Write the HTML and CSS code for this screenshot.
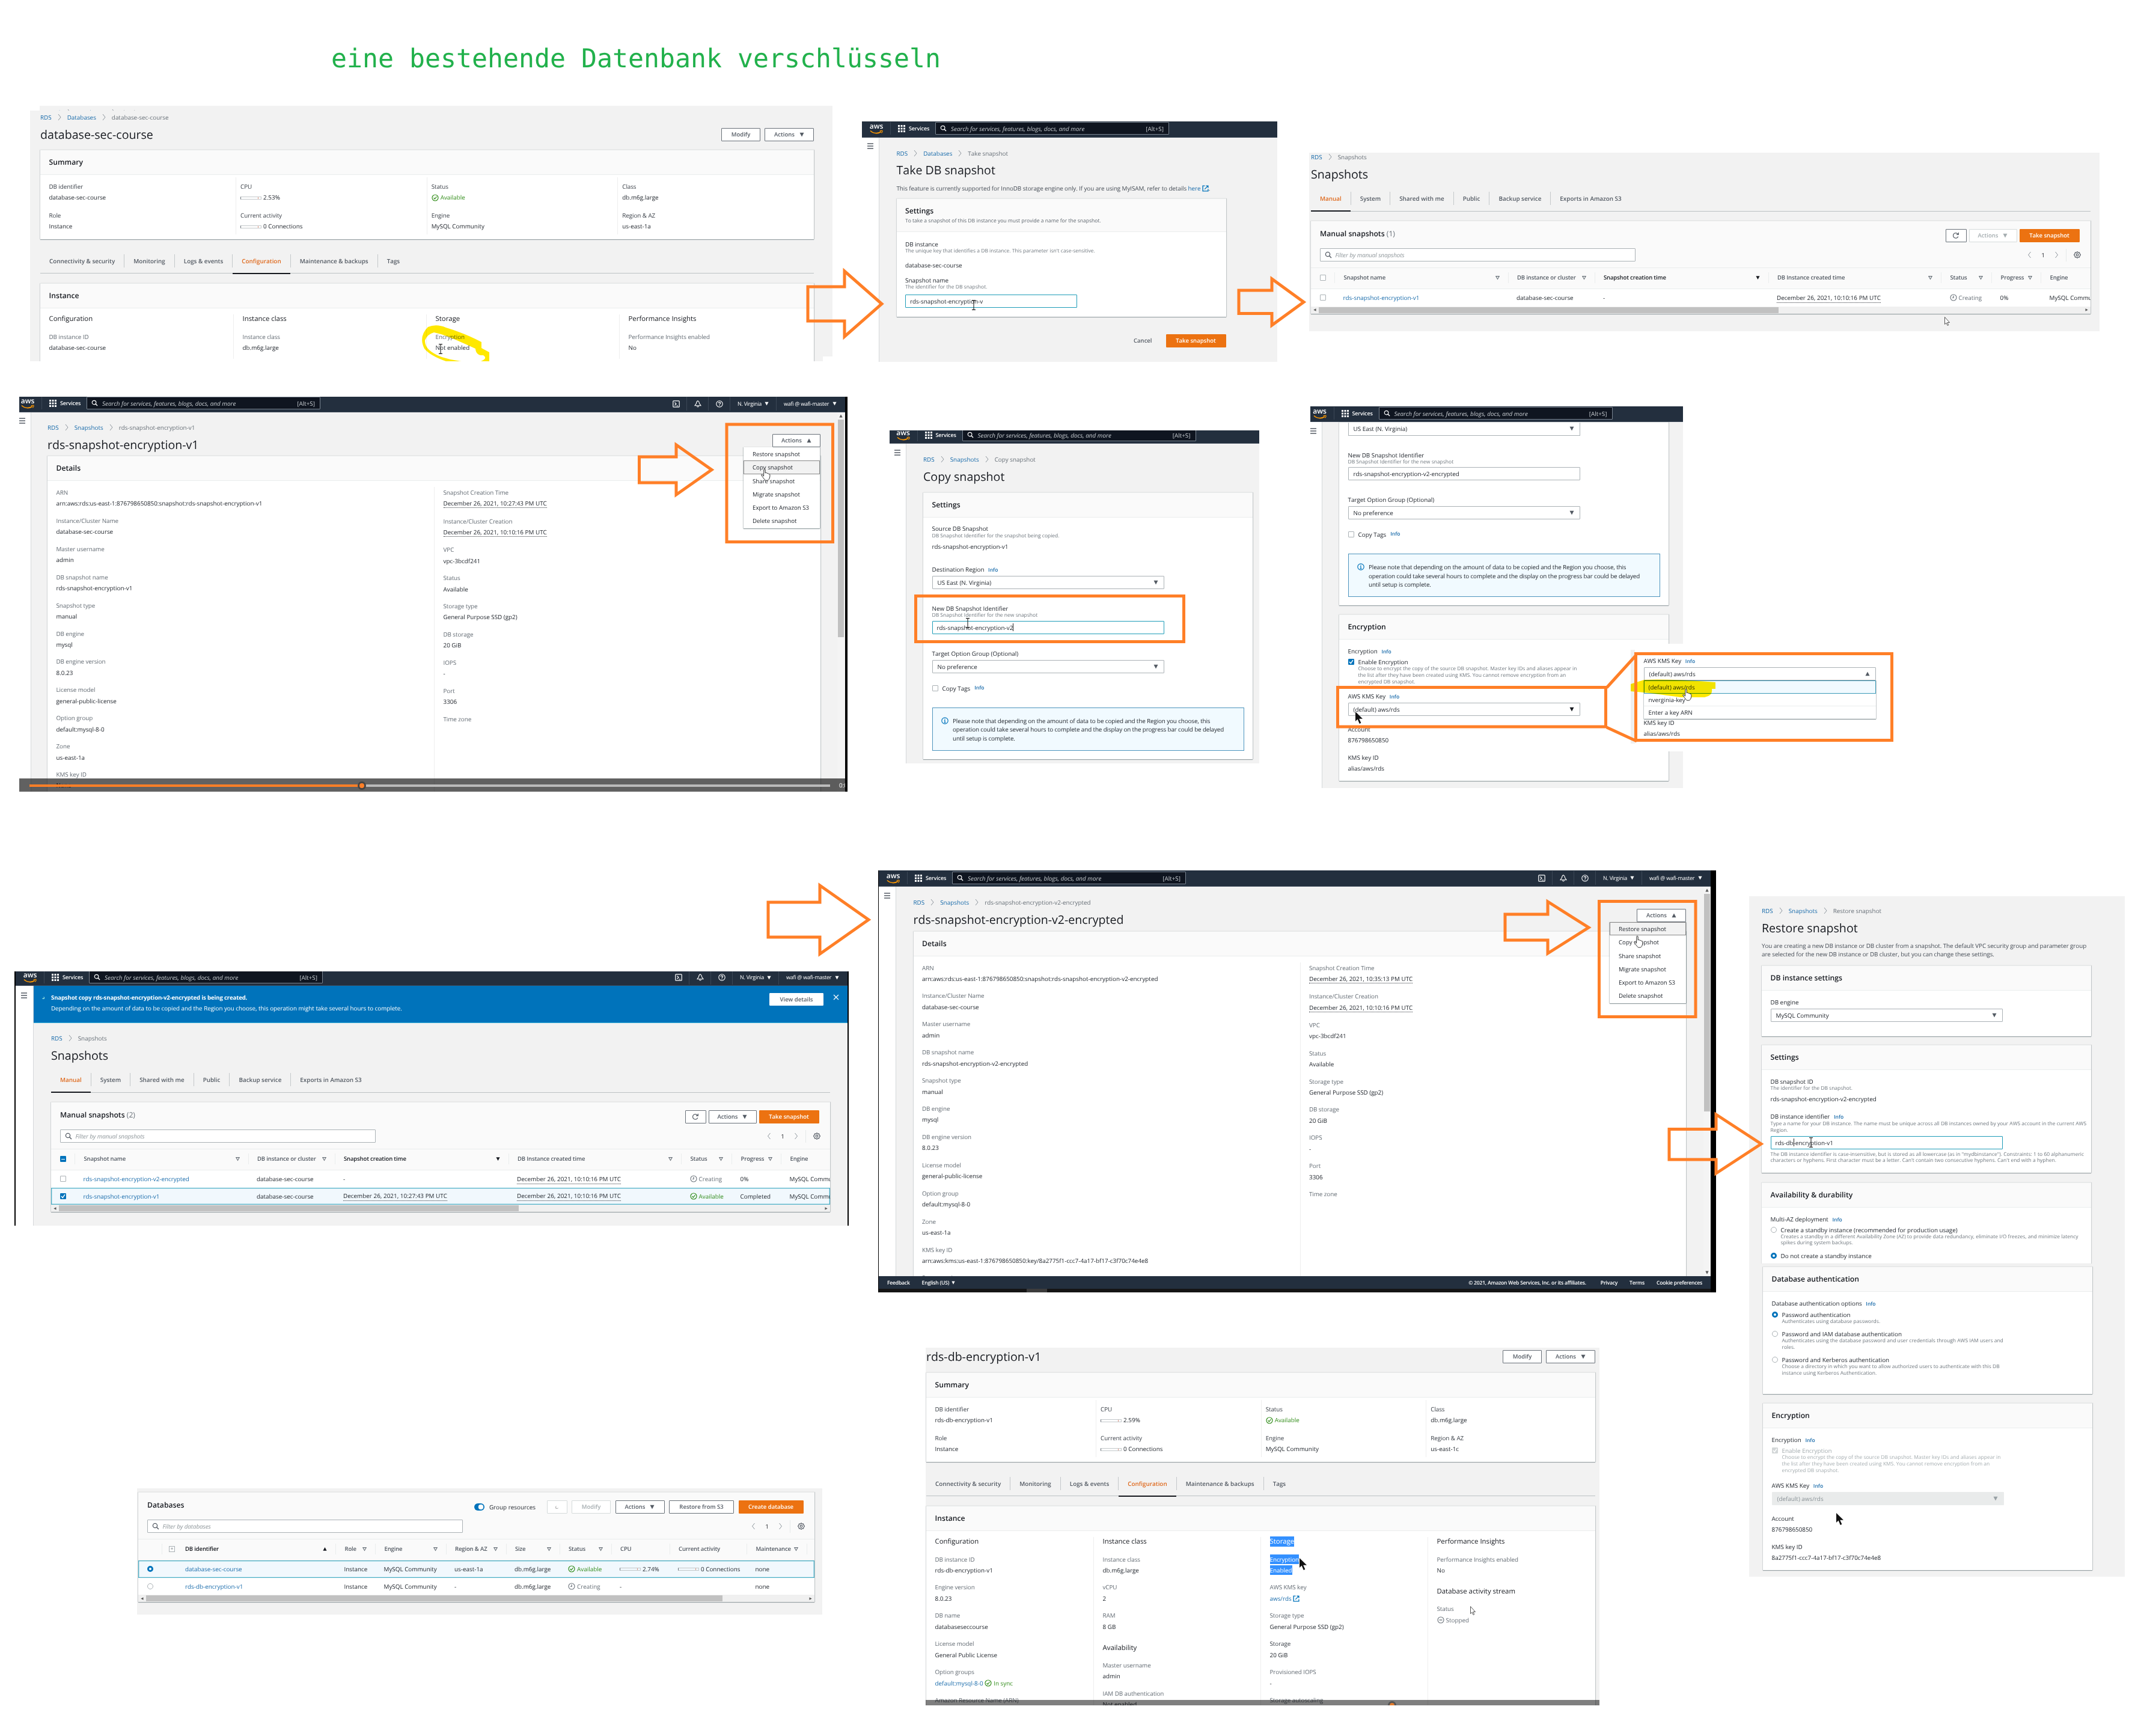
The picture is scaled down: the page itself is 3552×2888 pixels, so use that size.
FILE: index.html
```html
<!DOCTYPE html>
<html lang="de">
<head>
<meta charset="utf-8">
<title>eine bestehende Datenbank verschlüsseln</title>
<link rel="stylesheet" href="styles.css">
</head>
<body>
<svg class="defs" width="0" height="0">
  <defs>
    <symbol id="chev" viewBox="0 0 6 12"><path d="M1 1l4 5-4 5" fill="none" stroke="#8d959c" stroke-width="1"/></symbol>
    <symbol id="chevl" viewBox="0 0 6 12"><path d="M5 1L1 6l4 5" fill="none" stroke="#8d959c" stroke-width="1"/></symbol>
    <symbol id="search" viewBox="0 0 12 12"><circle cx="5" cy="5" r="3.6" fill="none" stroke="currentColor" stroke-width="1.3"/><path d="M7.7 7.7l3.3 3.3" stroke="currentColor" stroke-width="1.5"/></symbol>
    <symbol id="grid" viewBox="0 0 12 12"><path d="M0 0h3v3H0zM4.5 0h3v3h-3zM9 0h3v3H9zM0 4.5h3v3H0zM4.5 4.5h3v3h-3zM9 4.5h3v3H9zM0 9h3v3H0zM4.5 9h3v3h-3zM9 9h3v3H9z" fill="#fff"/></symbol>
    <symbol id="menu" viewBox="0 0 10 10"><path d="M0 1h10M0 5h10M0 9h10" stroke="#545b64" stroke-width="1.4"/></symbol>
    <symbol id="smile" viewBox="0 0 22 8"><path d="M1 1.5C6 6.5 14 6.8 19 3" fill="none" stroke="#f90" stroke-width="1.6"/><path d="M16.6 1.9c2-.8 4.2-.7 4.4-.3.2.5-.4 2.6-1.6 3.8" fill="none" stroke="#f90" stroke-width="1.1"/></symbol>
    <symbol id="term" viewBox="0 0 12 12"><rect x=".8" y=".8" width="10.4" height="10.4" rx="1" fill="none" stroke="#fff" stroke-width="1.2"/><path d="M3.5 3.5L6 6 3.5 8.500M6.500 9h2.500" fill="none" stroke="#fff" stroke-width="1.2"/></symbol>
    <symbol id="bell" viewBox="0 0 12 12"><path d="M6 .8c2 1 2.500 2.500 2.500 4.200L11 8.800H1L3.500 5C3.500 3.300 4 1.800 6 .8zM4.500 9.500c.3 2 2.700 2 3 0" fill="none" stroke="#fff" stroke-width="1.1"/></symbol>
    <symbol id="help" viewBox="0 0 12 12"><circle cx="6" cy="6" r="5.200" fill="none" stroke="#fff" stroke-width="1.100"/><path d="M4.300 4.700C4.400 2.400 7.800 2.600 7.600 4.600 7.500 5.800 6 5.800 6 7.300M6 8.300v1.200" fill="none" stroke="#fff" stroke-width="1.200"/></symbol>
    <symbol id="refresh" viewBox="0 0 12 12"><path d="M9.800 7.500A4.300 4.300 0 1 1 9 3l1.300 1M10.400 .8v3.400H7" fill="none" stroke="currentColor" stroke-width="1.200"/></symbol>
    <symbol id="gear" viewBox="0 0 12 12"><path d="M6 .8l1.500 1.300 2-.1.500 1.900L11.400 6 10 7.900l-.5 2-2-.1L6 11.200 4.500 9.800l-2 .1-.5-2L.6 6 2 3.900 2.500 2l2 .1z" fill="none" stroke="#545b64" stroke-width="1.200"/><circle cx="6" cy="6" r="1.800" fill="none" stroke="#545b64" stroke-width="1.200"/></symbol>
    <symbol id="ext" viewBox="0 0 12 12"><path d="M5 1.200H1.200v9.600h9.600V7M7 1.200h3.800V5M10.500 1.500L4.500 7.500" fill="none" stroke="#0073bb" stroke-width="1.500"/></symbol>
    <symbol id="ok" viewBox="0 0 12 12"><circle cx="6" cy="6" r="5" fill="none" stroke="#1d8102" stroke-width="1.200"/><path d="M3.600 6l1.800 2 3-3.800" fill="none" stroke="#1d8102" stroke-width="1.200"/></symbol>
    <symbol id="clock" viewBox="0 0 12 12"><circle cx="6" cy="6" r="5" fill="none" stroke="#687078" stroke-width="1.100"/><path d="M6 3v3.500H4" fill="none" stroke="#687078" stroke-width="1.200"/></symbol>
    <symbol id="stop" viewBox="0 0 12 12"><circle cx="6" cy="6" r="5" fill="none" stroke="#687078" stroke-width="1.100"/><path d="M3.500 6h5" stroke="#687078" stroke-width="1.300"/></symbol>
    <symbol id="info" viewBox="0 0 12 12"><circle cx="6" cy="6" r="5.200" fill="none" stroke="#0073bb" stroke-width="1.200"/><path d="M6 2.800v1.200M4.800 5.400H6v3.200M4.600 8.800h2.800" fill="none" stroke="#0073bb" stroke-width="1.200"/></symbol>
    <symbol id="tri" viewBox="0 0 8 8"><path d="M.5 .8h7L4 7.500z" fill="currentColor"/></symbol>
    <symbol id="trio" viewBox="0 0 8 8"><path d="M1 1.300h6L4 6.800z" fill="none" stroke="#687078" stroke-width="1.200"/></symbol>
    <symbol id="check" viewBox="0 0 10 10"><path d="M2 5l2.300 2.600L8 2.200" fill="none" stroke="#fff" stroke-width="1.500"/></symbol>
    <symbol id="arrowb" viewBox="0 0 12 20" overflow="visible"><path d="M0 0v16l3.600-3.400L6.800 20l2.600-1.200-3.200-7H12z" fill="#111"/></symbol>
    <symbol id="arroww" viewBox="0 0 10 15" overflow="visible"><path d="M.5 .5v12l2.600-2.300 2 4.300 1.700-.8-2-4.200h3.700z" fill="#fff" stroke="#444" stroke-width=".9"/></symbol>
    <symbol id="hand" viewBox="0 0 18 21" overflow="visible"><path d="M6 1.500c1.300-1 2.200 0 2.200 1.500v5l1-.6 1.300.2.6.9 1.600-.2 1 1.200 1.600.1c.7.8.9 3 .3 5.400-.8 3.200-2 5-3.800 5.200H8.500C6 18 3 13.500 1.500 11c1.500-1 2.700.3 4 2.200z" fill="#fff" stroke="#333" stroke-width="1"/></symbol>
    <symbol id="ibeam" viewBox="0 0 6 17" overflow="visible"><path d="M0 .6h2.300L3 1.200l.7-.6H6M3 1v15M0 16.400h2.300L3 15.800l.7.600H6" fill="none" stroke="#222" stroke-width="1.100"/></symbol>
  </defs>
</svg>

<main class="board">
<h1 class="headline">eine bestehende Datenbank verschlüsseln</h1>

<!-- database details, unencrypted -->
<div class="shot s1-back" aria-hidden="true"><div class="crumb"><a>RDS</a><svg><use href="#chev"/></svg><a>Databases</a><svg><use href="#chev"/></svg><span>database-sec-course</span></div></div>
<section class="shot s1">
  <div class="crumb"><a>RDS</a><svg><use href="#chev"/></svg><a>Databases</a><svg><use href="#chev"/></svg><span>database-sec-course</span></div>
  <div class="titlebar"><h2 class="title">database-sec-course</h2><div class="btn w65">Modify</div><div class="btn w82">Actions<svg class="tri"><use href="#tri"/></svg></div></div>
  <div class="card">
    <h3 class="head">Summary</h3>
    <div class="cols summary">
      <div><div class="f dk"><b>DB identifier</b><p>database-sec-course</p></div><div class="f dk"><b>Role</b><p>Instance</p></div></div>
      <div><div class="f dk"><b>CPU</b><p><i class="meter"></i>2.53%</p></div><div class="f dk"><b>Current activity</b><p><i class="meter"></i>0 Connections</p></div></div>
      <div><div class="f dk"><b>Status</b><p class="green"><svg class="st"><use href="#ok"/></svg>Available</p></div><div class="f dk"><b>Engine</b><p>MySQL Community</p></div></div>
      <div><div class="f dk"><b>Class</b><p>db.m6g.large</p></div><div class="f dk"><b>Region &amp; AZ</b><p>us-east-1a</p></div></div>
    </div>
  </div>
  <div class="tabs tall"><span>Connectivity &amp; security</span><span>Monitoring</span><span>Logs &amp; events</span><span class="on">Configuration</span><span>Maintenance &amp; backups</span><span>Tags</span></div>
  <div class="card open">
    <h3 class="head">Instance</h3>
    <div class="cols config">
      <div><h4>Configuration</h4><div class="f"><b>DB instance ID</b><p>database-sec-course</p></div></div>
      <div><h4>Instance class</h4><div class="f"><b>Instance class</b><p>db.m6g.large</p></div></div>
      <div><h4>Storage</h4><div class="f"><b>Encryption</b><p>Not enabled</p></div></div>
      <div><h4>Performance Insights</h4><div class="f"><b>Performance Insights enabled</b><p>No</p></div></div>
    </div>
  </div>
</section>

<!-- take snapshot form -->
<section class="shot s2">
  <div class="nav"><div class="navin"><div class="aws">aws<svg><use href="#smile"/></svg></div><i class="vs"></i><svg class="gr"><use href="#grid"/></svg><span class="svc">Services</span><div class="find"><svg><use href="#search"/></svg><em>Search for services, features, blogs, docs, and more</em><span>[Alt+S]</span></div></div></div>
  <div class="frame">
    <div class="side"><svg><use href="#menu"/></svg></div>
    <div class="page">
      <div class="crumb"><a>RDS</a><svg><use href="#chev"/></svg><a>Databases</a><svg><use href="#chev"/></svg><span>Take snapshot</span></div>
      <h2 class="title">Take DB snapshot</h2>
      <p class="lead">This feature is currently supported for InnoDB storage engine only. If you are using MyISAM, refer to details <a>here <svg><use href="#ext"/></svg></a>.</p>
      <div class="card w548">
        <div class="head two"><h3>Settings</h3><p>To take a snapshot of this DB instance you must provide a name for the snapshot.</p></div>
        <div class="form take">
          <div class="l mt13">DB instance</div><div class="d">The unique key that identifies a DB instance. This parameter isn't case-sensitive.</div>
          <div class="l mt11">database-sec-course</div>
          <div class="l mt11">Snapshot name</div><div class="d">The identifier for the DB snapshot.</div>
          <div class="inp focus short mt6">rds-snapshot-encryption-v</div>
        </div>
      </div>
      <div class="actions w548"><span class="cancel">Cancel</span><div class="btn pri w100">Take snapshot</div></div>
    </div>
  </div>
</section>

<!-- snapshot list, one entry -->
<section class="shot s3">
  <div class="crumb"><a>RDS</a><svg><use href="#chev"/></svg><span>Snapshots</span></div>
  <h2 class="title">Snapshots</h2>
  <div class="tabs"><span class="on">Manual</span><span>System</span><span>Shared with me</span><span>Public</span><span>Backup service</span><span>Exports in Amazon S3</span></div>
  <div class="card list">
    <div class="tools"><h3>Manual snapshots <small>(1)</small></h3><div class="btn w35"><svg class="ic"><use href="#refresh"/></svg></div><div class="btn w80 off">Actions<svg class="tri"><use href="#tri"/></svg></div><div class="btn pri w100">Take snapshot</div></div>
    <div class="filter"><div class="inp"><svg><use href="#search"/></svg><em>Filter by manual snapshots</em></div><div class="pager"><svg><use href="#chevl"/></svg><span>1</span><svg><use href="#chev"/></svg><i class="vs"></i><svg class="gear"><use href="#gear"/></svg></div></div>
    <div class="row th snap"><div><i class="cb"></i></div><div>Snapshot name<svg><use href="#trio"/></svg></div><div>DB instance or cluster<svg><use href="#trio"/></svg></div><div class="sorted">Snapshot creation time<svg><use href="#tri"/></svg></div><div>DB Instance created time<svg><use href="#trio"/></svg></div><div>Status<svg><use href="#trio"/></svg></div><div>Progress<svg><use href="#trio"/></svg></div><div>Engine</div></div>
    <div class="row snap"><div><i class="cb"></i></div><div><a>rds-snapshot-encryption-v1</a></div><div>database-sec-course</div><div>-</div><div><u>December 26, 2021, 10:10:16 PM UTC</u></div><div class="gray"><svg class="st"><use href="#clock"/></svg>Creating</div><div>0%</div><div>MySQL Community</div></div>
    <div class="hbar"><svg class="al"><use href="#tri"/></svg><i class="thumb w765"></i><svg class="ar"><use href="#tri"/></svg></div>
  </div>
</section>

<!-- snapshot details v1 -->
<section class="shot s4">
  <div class="nav"><div class="navin"><div class="aws">aws<svg><use href="#smile"/></svg></div><i class="vs"></i><svg class="gr"><use href="#grid"/></svg><span class="svc">Services</span><div class="find"><svg><use href="#search"/></svg><em>Search for services, features, blogs, docs, and more</em><span>[Alt+S]</span></div></div>
    <div class="acct"><div class="cell"><svg><use href="#term"/></svg></div><div class="cell"><svg><use href="#bell"/></svg></div><div class="cell"><svg><use href="#help"/></svg></div><div class="reg">N. Virginia<svg><use href="#tri"/></svg></div><div class="usr">wafi @ wafi-master<svg><use href="#tri"/></svg></div></div></div>
  <div class="frame">
    <div class="side"><svg><use href="#menu"/></svg></div>
    <div class="page">
      <div class="crumb"><a>RDS</a><svg><use href="#chev"/></svg><a>Snapshots</a><svg><use href="#chev"/></svg><span>rds-snapshot-encryption-v1</span></div>
      <div class="titlebar"><h2 class="title">rds-snapshot-encryption-v1</h2><div class="btn w80">Actions<svg class="tri up"><use href="#tri"/></svg></div></div>
      <div class="card">
        <h3 class="head">Details</h3>
        <div class="cols details">
          <div>
            <div class="f"><b>ARN</b><p>arn:aws:rds:us-east-1:876798650850:snapshot:rds-snapshot-encryption-v1</p></div>
            <div class="f"><b>Instance/Cluster Name</b><p>database-sec-course</p></div>
            <div class="f"><b>Master username</b><p>admin</p></div>
            <div class="f"><b>DB snapshot name</b><p>rds-snapshot-encryption-v1</p></div>
            <div class="f"><b>Snapshot type</b><p>manual</p></div>
            <div class="f"><b>DB engine</b><p>mysql</p></div>
            <div class="f"><b>DB engine version</b><p>8.0.23</p></div>
            <div class="f"><b>License model</b><p>general-public-license</p></div>
            <div class="f"><b>Option group</b><p>default:mysql-8-0</p></div>
            <div class="f"><b>Zone</b><p>us-east-1a</p></div>
            <div class="f"><b>KMS key ID</b><p>None</p></div>
          </div>
          <div>
            <div class="f du"><b>Snapshot Creation Time</b><p><u>December 26, 2021, 10:27:43 PM UTC</u></p></div>
            <div class="f du"><b>Instance/Cluster Creation</b><p><u>December 26, 2021, 10:10:16 PM UTC</u></p></div>
            <div class="f"><b>VPC</b><p>vpc-3bcdf241</p></div>
            <div class="f"><b>Status</b><p>Available</p></div>
            <div class="f"><b>Storage type</b><p>General Purpose SSD (gp2)</p></div>
            <div class="f"><b>DB storage</b><p>20 GiB</p></div>
            <div class="f"><b>IOPS</b><p>-</p></div>
            <div class="f"><b>Port</b><p>3306</p></div>
            <div class="f"><b>Time zone</b></div>
          </div>
        </div>
      </div>
    </div>
    <div class="vbar"><svg class="up"><use href="#tri"/></svg><i class="vthumb"></i></div>
  </div>
  <div class="menu"><span>Restore snapshot</span><span class="hov">Copy snapshot</span><span>Share snapshot</span><span>Migrate snapshot</span><span>Export to Amazon S3</span><span>Delete snapshot</span></div>
  <div class="player"><div class="track"><i class="done"></i><i class="knob"></i></div><span>0:03</span></div>
</section>

<!-- copy snapshot, top of form -->
<section class="shot s5">
  <div class="nav"><div class="navin"><div class="aws">aws<svg><use href="#smile"/></svg></div><i class="vs"></i><svg class="gr"><use href="#grid"/></svg><span class="svc">Services</span><div class="find"><svg><use href="#search"/></svg><em>Search for services, features, blogs, docs, and more</em><span>[Alt+S]</span></div></div></div>
  <div class="frame">
    <div class="side"><svg><use href="#menu"/></svg></div>
    <div class="page">
      <div class="crumb"><a>RDS</a><svg><use href="#chev"/></svg><a>Snapshots</a><svg><use href="#chev"/></svg><span>Copy snapshot</span></div>
      <h2 class="title">Copy snapshot</h2>
      <div class="card w548">
        <h3 class="head">Settings</h3>
        <div class="form">
          <div class="l mt11">Source DB Snapshot</div><div class="d mt1">DB Snapshot Identifier for the snapshot being copied.</div>
          <div class="l mt4">rds-snapshot-encryption-v1</div>
          <div class="l mt24">Destination Region <a class="nfo">Info</a></div>
          <div class="inp mt4">US East (N. Virginia)<svg><use href="#tri"/></svg></div>
          <div class="l mt25">New DB Snapshot Identifier</div><div class="d">DB Snapshot Identifier for the new snapshot</div>
          <div class="inp focus mt3">rds-snapshot-encryption-v2<i class="caret"></i></div>
          <div class="l mt25">Target Option Group (Optional)</div>
          <div class="inp mt4">No preference<svg><use href="#tri"/></svg></div>
          <div class="l opt mt18"><i class="cb"></i>Copy Tags <a class="nfo">Info</a></div>
          <div class="note mt25"><svg><use href="#info"/></svg><p>Please note that depending on the amount of data to be copied and the Region you choose, this<br>operation could take several hours to complete and the display on the progress bar could be delayed<br>until setup is complete.</p></div>
        </div>
      </div>
    </div>
  </div>
</section>

<!-- copy snapshot, scrolled down -->
<section class="shot s6">
  <div class="nav"><div class="navin"><div class="aws">aws<svg><use href="#smile"/></svg></div><i class="vs"></i><svg class="gr"><use href="#grid"/></svg><span class="svc">Services</span><div class="find"><svg><use href="#search"/></svg><em>Search for services, features, blogs, docs, and more</em><span>[Alt+S]</span></div></div></div>
  <div class="frame">
    <div class="side"><svg><use href="#menu"/></svg></div>
    <div class="page">
      <div class="card w548">
        <div class="form">
          <div class="inp cut">US East (N. Virginia)<svg><use href="#tri"/></svg></div>
          <div class="l mt25">New DB Snapshot Identifier</div><div class="d">DB Snapshot Identifier for the new snapshot</div>
          <div class="inp mt3">rds-snapshot-encryption-v2-encrypted</div>
          <div class="l mt25">Target Option Group (Optional)</div>
          <div class="inp mt4">No preference<svg><use href="#tri"/></svg></div>
          <div class="l opt mt18"><i class="cb"></i>Copy Tags <a class="nfo">Info</a></div>
          <div class="note mt25"><svg><use href="#info"/></svg><p>Please note that depending on the amount of data to be copied and the Region you choose, this<br>operation could take several hours to complete and the display on the progress bar could be delayed<br>until setup is complete.</p></div>
        </div>
      </div>
      <div class="card w548 gap">
        <h3 class="head">Encryption</h3>
        <div class="form">
          <div class="l mt12">Encryption <a class="nfo">Info</a></div>
          <div class="l opt mt4"><i class="cb chk"><svg><use href="#check"/></svg></i>Enable Encryption</div>
          <div class="d ind">Choose to encrypt the copy of the source DB snapshot. Master key IDs and aliases appear in<br>the list after they have been created using KMS. You cannot remove encryption from an<br>encrypted DB snapshot.</div>
          <div class="l mt11">AWS KMS Key <a class="nfo">Info</a></div>
          <div class="inp mt4 dark">(default) aws/rds<svg><use href="#tri"/></svg></div>
          <div class="l mt15">Account</div><div class="l mt4">876798650850</div>
          <div class="l mt15">KMS key ID</div><div class="l mt4">alias/aws/rds</div>
        </div>
      </div>
    </div>
  </div>
</section>

<!-- key dropdown, enlarged -->
<section class="shot keys">
  <div class="strip"></div>
  <div class="keybody">
    <div class="l">AWS KMS Key <a class="nfo">Info</a></div>
    <div class="inp mt4">(default) aws/rds<svg class="up"><use href="#tri"/></svg></div>
    <div class="opts"><span class="hov">(default) aws/rds</span><span>nverginia-key</span><span>Enter a key ARN</span></div>
    <div class="l tight">KMS key ID</div><div class="l mt4">alias/aws/rds</div>
  </div>
</section>

<!-- snapshot list, copy in progress -->
<section class="shot s7">
  <div class="nav"><div class="navin"><div class="aws">aws<svg><use href="#smile"/></svg></div><i class="vs"></i><svg class="gr"><use href="#grid"/></svg><span class="svc">Services</span><div class="find"><svg><use href="#search"/></svg><em>Search for services, features, blogs, docs, and more</em><span>[Alt+S]</span></div></div>
    <div class="acct"><div class="cell"><svg><use href="#term"/></svg></div><div class="cell"><svg><use href="#bell"/></svg></div><div class="cell"><svg><use href="#help"/></svg></div><div class="reg">N. Virginia<svg><use href="#tri"/></svg></div><div class="usr">wafi @ wafi-master<svg><use href="#tri"/></svg></div></div></div>
  <div class="frame">
    <div class="side"><svg><use href="#menu"/></svg></div>
    <div class="wide">
      <div class="banner"><i class="spin"></i><div class="msg"><b>Snapshot copy rds-snapshot-encryption-v2-encrypted is being created.</b><p>Depending on the amount of data to be copied and the Region you choose, this operation might take several hours to complete.</p></div><div class="btn">View details</div><svg class="x" viewBox="0 0 10 10"><path d="M1 1l8 8M9 1L1 9" stroke="#fff" stroke-width="1.200"/></svg></div>
      <div class="page">
        <div class="crumb"><a>RDS</a><svg><use href="#chev"/></svg><span>Snapshots</span></div>
        <h2 class="title">Snapshots</h2>
        <div class="tabs"><span class="on">Manual</span><span>System</span><span>Shared with me</span><span>Public</span><span>Backup service</span><span>Exports in Amazon S3</span></div>
        <div class="card list">
          <div class="tools"><h3>Manual snapshots <small>(2)</small></h3><div class="btn w35"><svg class="ic"><use href="#refresh"/></svg></div><div class="btn w80">Actions<svg class="tri"><use href="#tri"/></svg></div><div class="btn pri w100">Take snapshot</div></div>
          <div class="filter"><div class="inp"><svg><use href="#search"/></svg><em>Filter by manual snapshots</em></div><div class="pager"><svg><use href="#chevl"/></svg><span>1</span><svg><use href="#chev"/></svg><i class="vs"></i><svg class="gear"><use href="#gear"/></svg></div></div>
          <div class="row th snap"><div><i class="cb chk dash"></i></div><div>Snapshot name<svg><use href="#trio"/></svg></div><div>DB instance or cluster<svg><use href="#trio"/></svg></div><div class="sorted">Snapshot creation time<svg><use href="#tri"/></svg></div><div>DB Instance created time<svg><use href="#trio"/></svg></div><div>Status<svg><use href="#trio"/></svg></div><div>Progress<svg><use href="#trio"/></svg></div><div>Engine</div></div>
          <div class="row snap"><div><i class="cb"></i></div><div><a>rds-snapshot-encryption-v2-encrypted</a></div><div>database-sec-course</div><div>-</div><div><u>December 26, 2021, 10:10:16 PM UTC</u></div><div class="gray"><svg class="st"><use href="#clock"/></svg>Creating</div><div>0%</div><div>MySQL Community</div></div>
          <div class="row snap sel"><div><i class="cb chk"><svg><use href="#check"/></svg></i></div><div><a>rds-snapshot-encryption-v1</a></div><div>database-sec-course</div><div><u>December 26, 2021, 10:27:43 PM UTC</u></div><div><u>December 26, 2021, 10:10:16 PM UTC</u></div><div class="green"><svg class="st"><use href="#ok"/></svg>Available</div><div>Completed</div><div>MySQL Community</div></div>
          <div class="hbar"><svg class="al"><use href="#tri"/></svg><i class="thumb w765"></i><svg class="ar"><use href="#tri"/></svg></div>
        </div>
      </div>
    </div>
  </div>
</section>

<!-- snapshot details v2-encrypted -->
<section class="shot s8">
  <div class="nav"><div class="navin"><div class="aws">aws<svg><use href="#smile"/></svg></div><i class="vs"></i><svg class="gr"><use href="#grid"/></svg><span class="svc">Services</span><div class="find"><svg><use href="#search"/></svg><em>Search for services, features, blogs, docs, and more</em><span>[Alt+S]</span></div></div>
    <div class="acct"><div class="cell"><svg><use href="#term"/></svg></div><div class="cell"><svg><use href="#bell"/></svg></div><div class="cell"><svg><use href="#help"/></svg></div><div class="reg">N. Virginia<svg><use href="#tri"/></svg></div><div class="usr">wafi @ wafi-master<svg><use href="#tri"/></svg></div></div></div>
  <div class="frame">
    <div class="side"><svg><use href="#menu"/></svg></div>
    <div class="page">
      <div class="crumb"><a>RDS</a><svg><use href="#chev"/></svg><a>Snapshots</a><svg><use href="#chev"/></svg><span>rds-snapshot-encryption-v2-encrypted</span></div>
      <div class="titlebar"><h2 class="title">rds-snapshot-encryption-v2-encrypted</h2><div class="btn w82">Actions<svg class="tri up"><use href="#tri"/></svg></div></div>
      <div class="card">
        <h3 class="head">Details</h3>
        <div class="cols details">
          <div>
            <div class="f"><b>ARN</b><p>arn:aws:rds:us-east-1:876798650850:snapshot:rds-snapshot-encryption-v2-encrypted</p></div>
            <div class="f"><b>Instance/Cluster Name</b><p>database-sec-course</p></div>
            <div class="f"><b>Master username</b><p>admin</p></div>
            <div class="f"><b>DB snapshot name</b><p>rds-snapshot-encryption-v2-encrypted</p></div>
            <div class="f"><b>Snapshot type</b><p>manual</p></div>
            <div class="f"><b>DB engine</b><p>mysql</p></div>
            <div class="f"><b>DB engine version</b><p>8.0.23</p></div>
            <div class="f"><b>License model</b><p>general-public-license</p></div>
            <div class="f"><b>Option group</b><p>default:mysql-8-0</p></div>
            <div class="f"><b>Zone</b><p>us-east-1a</p></div>
            <div class="f"><b>KMS key ID</b><p>arn:aws:kms:us-east-1:876798650850:key/8a2775f1-ccc7-4a17-bf17-c3f70c74e4e8</p></div>
            <div class="f"><b>Source region</b></div>
          </div>
          <div>
            <div class="f du"><b>Snapshot Creation Time</b><p><u>December 26, 2021, 10:35:13 PM UTC</u></p></div>
            <div class="f du"><b>Instance/Cluster Creation</b><p><u>December 26, 2021, 10:10:16 PM UTC</u></p></div>
            <div class="f"><b>VPC</b><p>vpc-3bcdf241</p></div>
            <div class="f"><b>Status</b><p>Available</p></div>
            <div class="f"><b>Storage type</b><p>General Purpose SSD (gp2)</p></div>
            <div class="f"><b>DB storage</b><p>20 GiB</p></div>
            <div class="f"><b>IOPS</b><p>-</p></div>
            <div class="f"><b>Port</b><p>3306</p></div>
            <div class="f"><b>Time zone</b></div>
          </div>
        </div>
      </div>
    </div>
    <div class="vbar"><svg class="up"><use href="#tri"/></svg><i class="vthumb"></i><svg class="down"><use href="#tri"/></svg></div>
  </div>
  <div class="foot"><span>Feedback</span><span class="lang">English (US)<svg><use href="#tri"/></svg></span><span class="copy">© 2021, Amazon Web Services, Inc. or its affiliates.</span><span>Privacy</span><span>Terms</span><span>Cookie preferences</span></div>
  <div class="task"><i></i></div>
  <div class="menu"><span class="hov">Restore snapshot</span><span>Copy snapshot</span><span>Share snapshot</span><span>Migrate snapshot</span><span>Export to Amazon S3</span><span>Delete snapshot</span></div>
</section>

<!-- restore snapshot form -->
<section class="shot s9">
  <div class="crumb"><a>RDS</a><svg><use href="#chev"/></svg><a>Snapshots</a><svg><use href="#chev"/></svg><span>Restore snapshot</span></div>
  <h2 class="title">Restore snapshot</h2>
  <p class="lead">You are creating a new DB instance or DB cluster from a snapshot. The default VPC security group and parameter group<br>are selected for the new DB instance or DB cluster, but you can change these settings.</p>
  <div class="card w548">
    <h3 class="head">DB instance settings</h3>
    <div class="form pb24"><div class="l mt12">DB engine</div><div class="inp mt4">MySQL Community<svg><use href="#tri"/></svg></div></div>
  </div>
  <div class="card w548 gap">
    <h3 class="head">Settings</h3>
    <div class="form">
      <div class="l mt12">DB snapshot ID</div><div class="d">The identifier for the DB snapshot.</div>
      <div class="l mt4">rds-snapshot-encryption-v2-encrypted</div>
      <div class="l mt15">DB instance identifier <a class="nfo">Info</a></div>
      <div class="d mt1">Type a name for your DB instance. The name must be unique across all DB instances owned by your AWS account in the current AWS<br>Region.</div>
      <div class="inp focus mt3">rds-db<i class="caret"></i>-encryption-v1</div>
      <div class="d mt4">The DB instance identifier is case-insensitive, but is stored as all lowercase (as in "mydbinstance"). Constraints: 1 to 60 alphanumeric<br>characters or hyphens. First character must be a letter. Can't contain two consecutive hyphens. Can't end with a hyphen.</div>
    </div>
  </div>
  <div class="card w548 gap avail">
    <h3 class="head">Availability &amp; durability</h3>
    <div class="form">
      <div class="l mt12">Multi-AZ deployment <a class="nfo">Info</a></div>
      <div class="l opt mt4"><i class="rb"></i>Create a standby instance (recommended for production usage)</div>
      <div class="d ind">Creates a standby in a different Availability Zone (AZ) to provide data redundancy, eliminate I/O freezes, and minimize latency<br>spikes during system backups.</div>
      <div class="l opt mt8"><i class="rb on"></i>Do not create a standby instance</div>
    </div>
  </div>
  <div class="card w548 shift auth">
    <h3 class="head">Database authentication</h3>
    <div class="form pb29">
      <div class="l mt12">Database authentication options <a class="nfo">Info</a></div>
      <div class="l opt mt5"><i class="rb on"></i>Password authentication</div>
      <div class="d ind">Authenticates using database passwords.</div>
      <div class="l opt mt8"><i class="rb"></i>Password and IAM database authentication</div>
      <div class="d ind">Authenticates using the database password and user credentials through AWS IAM users and<br>roles.</div>
      <div class="l opt mt8"><i class="rb"></i>Password and Kerberos authentication</div>
      <div class="d ind">Choose a directory in which you want to allow authorized users to authenticate with this DB<br>instance using Kerberos Authentication.</div>
    </div>
  </div>
  <div class="card w548 gap shift">
    <h3 class="head">Encryption</h3>
    <div class="form">
      <div class="l mt12">Encryption <a class="nfo">Info</a></div>
      <div class="l opt mt4 dim"><i class="cb grey"><svg><use href="#check"/></svg></i>Enable Encryption</div>
      <div class="d ind dim">Choose to encrypt the copy of the source DB snapshot. Master key IDs and aliases appear in<br>the list after they have been created using KMS. You cannot remove encryption from an<br>encrypted DB snapshot.</div>
      <div class="l mt11">AWS KMS Key <a class="nfo">Info</a></div>
      <div class="inp mt4 disabled">(default) aws/rds<svg><use href="#tri"/></svg></div>
      <div class="l mt15">Account</div><div class="l mt4">876798650850</div>
      <div class="l mt15">KMS key ID</div><div class="l mt4">8a2775f1-ccc7-4a17-bf17-c3f70c74e4e8</div>
    </div>
  </div>
</section>

<!-- database list -->
<section class="shot s10">
  <div class="card list">
    <div class="tools"><h3>Databases</h3><i class="toggle"></i><span class="grp">Group resources</span><div class="btn w34 off"><i class="arc"></i></div><div class="btn w65 off">Modify</div><div class="btn w82">Actions<svg class="tri"><use href="#tri"/></svg></div><div class="btn w108">Restore from S3</div><div class="btn pri w108">Create database</div></div>
    <div class="filter"><div class="inp"><svg><use href="#search"/></svg><em>Filter by databases</em></div><div class="pager"><svg><use href="#chevl"/></svg><span>1</span><svg><use href="#chev"/></svg><i class="vs"></i><svg class="gear"><use href="#gear"/></svg></div></div>
    <div class="row th dbs"><div></div><div class="sorted"><i class="plus">+</i>DB identifier<svg class="up"><use href="#tri"/></svg></div><div>Role<svg><use href="#trio"/></svg></div><div>Engine<svg><use href="#trio"/></svg></div><div>Region &amp; AZ<svg><use href="#trio"/></svg></div><div>Size<svg><use href="#trio"/></svg></div><div>Status<svg><use href="#trio"/></svg></div><div>CPU</div><div>Current activity</div><div>Maintenance<svg><use href="#trio"/></svg></div><div></div></div>
    <div class="row dbs sel"><div><i class="rb on"></i></div><div class="name"><a>database-sec-course</a></div><div>Instance</div><div>MySQL Community</div><div>us-east-1a</div><div>db.m6g.large</div><div class="green"><svg class="st"><use href="#ok"/></svg>Available</div><div><i class="meter"></i>2.74%</div><div><i class="meter"></i>0 Connections</div><div>none</div><div></div></div>
    <div class="row dbs"><div><i class="rb"></i></div><div class="name"><a>rds-db-encryption-v1</a></div><div>Instance</div><div>MySQL Community</div><div>-</div><div>db.m6g.large</div><div class="gray"><svg class="st"><use href="#clock"/></svg>Creating</div><div>-</div><div></div><div>none</div><div></div></div>
    <div class="hbar"><svg class="al"><use href="#tri"/></svg><i class="thumb w959"></i><svg class="ar"><use href="#tri"/></svg></div>
  </div>
</section>

<!-- database details, encrypted -->
<section class="shot s11">
  <div class="titlebar"><h2 class="title">rds-db-encryption-v1</h2><div class="btn w65">Modify</div><div class="btn w82">Actions<svg class="tri"><use href="#tri"/></svg></div></div>
  <div class="card">
    <h3 class="head">Summary</h3>
    <div class="cols summary">
      <div><div class="f dk"><b>DB identifier</b><p>rds-db-encryption-v1</p></div><div class="f dk"><b>Role</b><p>Instance</p></div></div>
      <div><div class="f dk"><b>CPU</b><p><i class="meter"></i>2.59%</p></div><div class="f dk"><b>Current activity</b><p><i class="meter"></i>0 Connections</p></div></div>
      <div><div class="f dk"><b>Status</b><p class="green"><svg class="st"><use href="#ok"/></svg>Available</p></div><div class="f dk"><b>Engine</b><p>MySQL Community</p></div></div>
      <div><div class="f dk"><b>Class</b><p>db.m6g.large</p></div><div class="f dk"><b>Region &amp; AZ</b><p>us-east-1c</p></div></div>
    </div>
  </div>
  <div class="tabs tall"><span>Connectivity &amp; security</span><span>Monitoring</span><span>Logs &amp; events</span><span class="on">Configuration</span><span>Maintenance &amp; backups</span><span>Tags</span></div>
  <div class="card open">
    <h3 class="head">Instance</h3>
    <div class="cols config">
      <div><h4>Configuration</h4>
        <div class="f"><b>DB instance ID</b><p>rds-db-encryption-v1</p></div><div class="f"><b>Engine version</b><p>8.0.23</p></div><div class="f"><b>DB name</b><p>databaseseccourse</p></div><div class="f"><b>License model</b><p>General Public License</p></div><div class="f"><b>Option groups</b><p><a>default:mysql-8-0</a> <span class="green"><svg class="st"><use href="#ok"/></svg>In sync</span></p></div><div class="f"><b>Amazon Resource Name (ARN)</b></div></div>
      <div><h4>Instance class</h4>
        <div class="f"><b>Instance class</b><p>db.m6g.large</p></div><div class="f"><b>vCPU</b><p>2</p></div><div class="f"><b>RAM</b><p>8 GB</p></div>
        <h4>Availability</h4>
        <div class="f"><b>Master username</b><p>admin</p></div><div class="f"><b>IAM DB authentication</b><p>Not enabled</p></div></div>
      <div><h4><mark>Storage</mark></h4>
        <div class="f"><b><mark>Encryption</mark></b><p><mark>Enabled</mark></p></div><div class="f"><b>AWS KMS key</b><p><a>aws/rds <svg class="ext"><use href="#ext"/></svg></a></p></div><div class="f"><b>Storage type</b><p>General Purpose SSD (gp2)</p></div><div class="f dk"><b>Storage</b><p>20 GiB</p></div><div class="f"><b>Provisioned IOPS</b><p>-</p></div><div class="f"><b>Storage autoscaling</b></div></div>
      <div><h4>Performance Insights</h4>
        <div class="f"><b>Performance Insights enabled</b><p>No</p></div>
        <h4>Database activity stream</h4>
        <div class="f"><b>Status</b><p class="gray"><svg class="st"><use href="#stop"/></svg>Stopped</p></div></div>
    </div>
  </div>
  <div class="shade"></div>
</section>

<!-- highlighter strokes -->
<svg class="marks blend" width="3552" height="2888" viewBox="0 0 3552 2888">
  <path class="yellow" fill-rule="evenodd" d="M712 544Q726 538 742 545Q775 555 801 569V579L814 586V601H742Q716 592 706 580Q696 560 712 544ZM722 553Q711 556 707 566Q706 583 735 594Q750 599 768 601H800Q812 596 804 591Q792 592 791 580Q755 563 734 556Z"/>
  <path class="yellow" d="M2713 1138L2735 1131Q2775 1129 2854 1135V1146H2848Q2850 1157 2836 1160H2796Q2760 1155 2745 1153L2713 1150Z"/>
</svg>

<!-- arrows, frames and pointers -->
<svg class="marks" width="3552" height="2888" viewBox="0 0 3552 2888">
  <g class="orange">
    <path d="M1344 477H1405V451L1467 505.500L1405 560V534H1344Z"/>
    <path d="M2061 483H2116V464L2169 502.500L2116 541V521.500H2061Z"/>
    <path d="M1063.500 760H1125V740L1184 781.500L1125 823V803H1063.500Z"/>
    <path d="M1278 1501H1364V1473L1445 1530L1364 1587V1559H1278Z"/>
    <path d="M2504 1521H2575V1500L2643 1543L2575 1586V1564H2504Z"/>
    <path d="M2777 1878.500H2855V1854L2930 1903L2855 1952V1929H2777Z"/>
    <path d="M1209 706H1385.500V901.500H1209Z"/>
    <path d="M1523.500 991.500H1969.500V1067.500H1523.500Z"/>
    <path d="M2225.500 1143.500H2671.500V1209H2225.500Z"/>
    <path d="M2721.500 1087.500H3147.500V1231.500H2721.500Z"/>
    <path d="M2673 1144L2722 1090M2673 1210L2723 1233"/>
    <path d="M2660.500 1499.500H2821V1691.500H2660.500Z"/>
  </g>
  <use href="#ibeam" x="730" y="572" width="6" height="17"/>
  <use href="#ibeam" x="1617" y="499" width="6" height="17"/>
  <use href="#ibeam" x="1607" y="1028" width="6" height="17"/>
  <use href="#ibeam" x="3010" y="1892" width="6" height="17"/>
  <use href="#arroww" x="3235" y="527" width="10" height="15"/>
  <use href="#arroww" x="2446" y="2672" width="10" height="15"/>
  <use href="#arrowb" x="2255" y="1184" width="12" height="20"/>
  <use href="#arrowb" x="3055" y="2517" width="12" height="20"/>
  <use href="#arrowb" x="2162" y="2592" width="12" height="20"/>
  <use href="#hand" x="1265" y="779" width="18" height="21"/>
  <use href="#hand" x="2798" y="1145" width="18" height="21"/>
  <use href="#hand" x="2717" y="1556" width="18" height="21"/>
  <path d="M2309 2837a7 7 0 0 1 14 0z" fill="#555"/><path d="M2312 2837a4 4 0 0 1 8 0z" fill="#e07b2e"/>
</svg>
</main>
</body>
</html>
```

FILE: styles.css
```css
* { box-sizing: border-box; margin: 0; padding: 0; }
body { background: #fff; font: 9.900px/14px "Open Sans", "Noto Sans", sans-serif; color: #22272e; text-rendering: geometricPrecision; white-space: nowrap; }
.defs { position: absolute; }
.board { position: relative; width: 3552px; height: 2888px; overflow: hidden; }
svg { display: inline-block; flex: none; }
i { font-style: normal; flex: none; }
a { color: #1a6cab; }
.headline { position: absolute; left: 551px; top: 69px; font: 43.200px/58px "DejaVu Sans Mono", monospace; color: #22b14c; }

/* screens placed on the board */
.shot { position: absolute; overflow: hidden; background: #f2f2f2; }
.s1-back { left: 66px; top: 176px; width: 1319px; height: 417px; padding: 4px 17px; }
.s1 { left: 50px; top: 184px; width: 1319px; height: 417px; padding: 4px 15px 0 17px; }
.s2 { left: 1434px; top: 202px; width: 691px; height: 400px; }
.s3 { left: 2178px; top: 254px; width: 1315px; height: 297px; padding: 0 15px 0 3px; }
.s4 { left: 32px; top: 660px; width: 1378px; height: 657px; border-right: 4px solid #000; }
.s5 { left: 1480px; top: 716px; width: 615px; height: 554px; }
.s6 { left: 2180px; top: 676px; width: 620px; height: 635px; }
.keys { left: 2713px; top: 1071px; width: 447px; height: 179px; background: #fff; }
.s7 { left: 24px; top: 1616px; width: 1388px; height: 423px; border: solid #000; border-width: 0 2px; }
.s8 { left: 1461px; top: 1448px; width: 1394px; height: 702px; border: solid #000; border-width: 0 9px 0 1px; }
.s9 { left: 2910px; top: 1491px; width: 625px; height: 1132px; padding: 17px 0 0 21px; }
.s10 { left: 228px; top: 2476px; width: 1140px; height: 210px; padding: 6px 13px 0 2px; }
.s11 { left: 1540px; top: 2242px; width: 1121px; height: 595px; padding: 0 7px 0 1px; }

/* top navigation */
.nav { display: flex; height: 27px; background: #232f3e; color: #fff; overflow: hidden; border-bottom: 1px solid #3b4756; }
.navin { display: flex; align-items: center; height: 21px; margin-top: 1px; flex: none; }
.aws { width: 22px; height: 21px; margin-left: 13px; font: 600 12px/13px "Open Sans", sans-serif; display: flex; flex-direction: column; align-items: center; }
.aws svg { width: 22px; height: 8px; }
.vs { width: 1px; height: 21px; background: #3b4756; }
.navin .vs { margin: 0 12px; }
.gr { width: 12px; height: 12px; margin-right: 6px; }
.svc { width: 44px; font-weight: 600; font-size: 9px; letter-spacing: -.15px; }
.find { display: flex; align-items: center; width: 389px; height: 21px; background: #0f1520; border: 1px solid #7a8591; border-radius: 1px; padding: 0 8px 0 7px; color: #c8cdd1; }
.find svg { width: 11px; height: 11px; margin-right: 7px; color: #fff; }
.find em { flex: 1; }
.acct { margin-left: auto; display: flex; align-items: center; padding-right: 14px; height: 23px; font-size: 9px; letter-spacing: -.25px; }
.acct .cell { width: 36px; height: 23px; display: flex; align-items: center; justify-content: center; border-right: 1px solid #3b4756; }
.cell svg { width: 12px; height: 12px; }
.reg, .usr { display: flex; align-items: center; justify-content: space-between; height: 23px; padding-left: 12px; }
.reg { width: 77px; padding-right: 12px; border-right: 1px solid #3b4756; }
.usr { width: 100px; }
.acct .reg svg, .acct .usr svg { width: 7px; height: 7px; }
.s4 .nav { height: 26px; }
.s4 .navin { margin-left: -10px; margin-top: 0; }
.s5 .nav { height: 22px; }
.s5 .navin { margin: -3px 0 0 -1.500px; }
.s6 .nav { height: 26px; }
.s6 .navin { margin-left: -8.500px; }
.s7 .nav { height: 24px; }
.s7 .navin { margin-top: -1px; }
.s7 .acct { height: 20px; }
.s8 .navin { margin-top: 2px; }
.s8 .acct { height: 25px; }

.frame { display: flex; }
.side { width: 29px; height: 1000px; background: #fff; border-right: 1px solid #d5d8da; padding: 9px 0 0 9px; flex: none; }
.side svg { width: 10px; height: 10px; display: block; }
.s4 .side { width: 20px; padding-left: 0; }
.s5 .side { width: 28px; padding: 10px 0 0 8px; }
.s6 .side { width: 20px; padding-left: 0; padding-top: 10px; }
.s7 .side { width: 30px; padding-top: 11px; }
.s8 .side { padding-top: 10px; }

/* headings */
.crumb { display: flex; align-items: center; height: 14px; color: #687078; }
.crumb svg { width: 6px; height: 12px; margin: 0 10px; }
.title { font-size: 19.600px; line-height: 24px; font-weight: 400; color: #16191f; }
.titlebar { display: flex; gap: 7px; align-items: center; }
.titlebar .title { flex: 1; }
.lead { color: #464d56; line-height: 14px; letter-spacing: -.09px; }
.lead svg { width: 11px; height: 11px; vertical-align: -2px; }

.s1 .titlebar { margin-top: 10px; }
.s1 > .card { margin-top: 13px; }
.s2 .page { padding: 19px 0 0 28.500px; }
.s2 .title { margin-top: 9px; }
.s2 .lead { margin-top: 11px; }
.s2 .card { margin-top: 10px; }
.s3 .title { margin-top: 10px; }
.s4 .page { padding: 18px 0 0 27px; width: 1313px; }
.s4 .titlebar { margin-top: 10px; }
.s4 .card { margin-top: 6px; height: 600px; }
.s4 .titlebar .btn, .s8 .titlebar .btn { margin-top: -15px; }
.s5 .page { padding: 19px 0 0 28px; }
.s5 .title { margin-top: 10px; }
.s5 .card { margin-top: 14px; }
.s6 .page { padding: 0 0 0 28px; }
.s7 .page { padding: 18px 0 0 29px; width: 1325px; }
.s7 .title { margin-top: 10px; }
.s8 .frame { height: 648px; overflow: hidden; }
.s8 .page { padding: 19px 0 0 28.500px; width: 1314px; }
.s8 .titlebar { margin-top: 10px; }
.s8 .card { margin-top: 7px; height: 600px; }
.s9 .title { margin-top: 10px; }
.s9 .lead { margin-top: 10px; margin-bottom: 11.500px; }
.s11 .titlebar { margin-top: 3px; }
.s11 > .card { margin-top: 14px; }

/* buttons */
.btn { height: 22px; border: 1px solid #687078; border-radius: 1px; background: #fff; color: #545b64; font-weight: 600; font-size: 9.500px; display: flex; align-items: center; justify-content: center; flex: none; }
.btn .tri { width: 8px; height: 8px; margin-left: 8px; }
.btn .ic { width: 12px; height: 12px; }
.up { transform: rotate(180deg); }
.pri { background: #ec7211; border-color: #ec7211; color: #fff; }
.off { border-color: #d5dbdb; color: #a5adb0; }
.w34 { width: 34px; } .w35 { width: 35px; } .w65 { width: 65px; } .w80 { width: 80px; } .w82 { width: 82px; } .w100 { width: 100px; } .w108 { width: 108px; }

/* containers */
.card { background: #fff; border-top: 1px solid #e6e9e9; box-shadow: 0 1px 1px rgba(0,28,36,.35), 1px 0 1px rgba(0,28,36,.15), -1px 0 1px rgba(0,28,36,.07); }
.w548 { width: 548px; }
.head, .tools h3 { font-size: 12.200px; font-weight: 600; color: #16191f; }
h3.head { height: 41px; line-height: 40px; padding-left: 14.500px; background: #fafafa; border-bottom: 1px solid #eaeded; }
.two { height: 55px; padding: 12px 0 0 14.500px; background: #fafafa; border-bottom: 1px solid #eaeded; }
.two h3 { font-size: 12.200px; font-weight: 600; line-height: 16px; }
.two p { font: 8.550px/17px "Open Sans", sans-serif; color: #5f676f; }
.cols { display: grid; }
.cols > div { padding-left: 14.500px; position: relative; }
.cols > div + div { border-left: 1px solid #eee; }
.f { line-height: 18.400px; margin-bottom: 10.100px; }
.f b { display: block; font-weight: 400; color: #646c74; letter-spacing: -.08px; }
.f.dk b { color: #383e46; }
.f.du { margin-bottom: 10.800px; }
u { text-decoration: none; border-bottom: 1px dotted #30353c; }
h4 { font-size: 11.400px; line-height: 16px; font-weight: 400; color: #16191f; margin-bottom: 11.500px; }
.f + h4 { margin-top: 18.400px; }
.summary { grid-template-columns: 317.600px 317.600px 317.600px 1fr; padding: 4px 0 8px; }
.s11 .summary { grid-template-columns: 274.600px 274.600px 274.600px 1fr; }
.summary > div { padding-top: 6px; height: 95px; padding-left: 7px; }
.summary > div:first-child { padding-left: 14.500px; margin-right: -7.500px; }
.summary > div + div { margin-left: 7.500px; }
.summary .f { margin-bottom: 11px; }
.config { grid-template-columns: 321px 321px 321px 1fr; padding-top: 10.500px; }
.s11 .config { grid-template-columns: 278px 278px 278px 1fr; }
.details { grid-template-columns: 643px 1fr; padding-top: 10px; }
.s8 .details { padding-top: 9.500px; }
.open { height: 400px; }
.green { color: #1d8102; opacity: .9; }
.gray { color: #687078; }
.st { width: 12px; height: 12px; vertical-align: -2.500px; margin-right: 3px; }
.ext { width: 11px; height: 11px; vertical-align: -2px; }
.meter { display: inline-block; width: 35px; height: 5px; border: 1px solid #c3c8ca; border-left-color: #687078; margin-right: 3px; background: linear-gradient(90deg, transparent 28px, #d98 28px, #d98 29px, transparent 29px); }
mark { background: #3390ff; color: #fff; padding: 1px 0; }

/* tabs */
.tabs { display: flex; align-items: flex-start; height: 32.500px; margin-top: 17px; border-bottom: 1.500px solid #bcc1c3; font-weight: 600; font-size: 9.900px; letter-spacing: -.02px; color: #545b64; }
.tabs span { padding: 4px 15px 4px; height: 22px; position: relative; border-right: 1px solid #c4c8ca; }
.tabs span:last-child { border: 0; }
.tabs .on { color: #df6a1e; }
.tabs .on::after { content: ""; position: absolute; left: 0; right: 0; bottom: -11px; height: 2px; background: #16191f; }
.tabs + .card { margin-top: 15.500px; }
.tall { margin-top: 24.500px; }

/* dropdown menu */
.menu { position: absolute; background: #fff; display: flex; flex-direction: column; box-shadow: 0 1px 1px rgba(0,28,36,.4), 1px 0 1px rgba(0,28,36,.2), -1px 0 1px rgba(0,28,36,.15); width: 127px; height: 135px; }
.menu span { height: 22.300px; line-height: 23px; padding-left: 15px; font-size: 9.700px; }
.menu .hov { background: #f2f2f2; border: 1px solid #888; line-height: 21px; padding-left: 14px; }
.s4 .menu { left: 1205px; top: 84px; }
.s8 .menu { left: 1216px; top: 86px; }

/* scrollbars and player */
.vbar { width: 12px; margin-left: auto; height: 700px; background: #f4f4f4; display: flex; flex-direction: column; align-items: center; padding-top: 3px; }
.s4 .vbar { margin-left: 28px; }
.s8 .vbar { height: 648px; }
.vbar svg { width: 6px; height: 6px; color: #555; }
.vthumb { width: 10px; height: 362px; background: #c1c1c1; margin-top: 3px; }
.down { margin-top: auto; margin-bottom: 3px; }
.player { position: absolute; left: 0; right: 0; bottom: 0; height: 22px; background: rgba(0,0,0,.62); display: flex; align-items: center; padding-left: 17px; color: #fff; }
.track { position: relative; width: 1332px; height: 4px; background: #bbb; margin-top: 2px; flex: none; }
.done { position: absolute; left: 0; top: 0; height: 4px; width: 553px; background: #ff7f27; }
.knob { position: absolute; left: 546px; top: -5px; width: 14px; height: 14px; border-radius: 50%; background: #ff7f27; border: 3px solid #444; }
.player span { margin-left: 15px; }
.shade { position: absolute; left: 0; right: 0; bottom: 0; height: 9px; background: rgba(0,0,0,.5); }
.foot { display: flex; align-items: center; height: 21px; background: #232f3e; color: #fff; font-size: 8.600px; font-weight: 600; letter-spacing: -.22px; padding: 0 14px; gap: 20px; position: relative; }
.foot svg { width: 6px; height: 6px; margin-left: 4px; }
.copy { margin-left: auto; }
.foot .copy { margin-right: 4px; }
.task { height: 7px; background: #151515; padding-left: 246px; position: relative; }
.task i { display: block; width: 34px; height: 7px; background: #3c3c3c; }

/* forms */
.form { padding: 0 14.500px 14px; }
.l { height: 14px; }
.d { font-size: 8.500px; line-height: 10.800px; color: #70787f; }
.ind { padding-left: 17px; }
.opt { display: flex; align-items: center; }
.opt .nfo { margin-left: 7px; }
.nfo { font-size: 8.500px; font-weight: 600; margin-left: 4px; }
.inp { display: flex; align-items: center; width: 386px; height: 22px; background: #fff; border: 1px solid #aab1b5; border-radius: 1px; padding: 0 9px 0 8px; }
.inp svg { width: 8px; height: 8px; margin-left: auto; color: #545b64; }
.focus { border: 1.500px solid #1d9cb8; padding-left: 7px; }
.short { width: 286px; }
.cut { border-top: 0; height: 21.500px; }
.dark svg { color: #16191f; }
.disabled { background: #e9ebeb; border-color: #e9ebeb; color: #8a9297; }
.disabled svg { color: #99a1a5; }
.dim { color: #a5adb0; }
.caret { width: 1px; height: 13px; background: #222; margin-right: -1px; }
.note { display: flex; height: 72px; border: 1px solid #4d94bd; background: #f1faff; padding: 14px 0 0 14.500px; line-height: 14.450px; letter-spacing: -.13px; }
.note svg { width: 12px; height: 12px; margin: 1px 7px 0 0; }
.cb { width: 10px; height: 10px; border: 1px solid #aab1b5; border-radius: 1px; background: #fff; display: flex; }
.rb { width: 10px; height: 10px; border: 1px solid #aab1b5; border-radius: 50%; background: #fff; }
.rb.on { border: 3px solid #0073bb; }
.opt .cb, .opt .rb { margin-right: 7px; }
.chk { background: #0073bb; border-color: #0073bb; }
.grey { background: #d3d7d8; border-color: #d3d7d8; }
.cb svg { width: 10px; height: 10px; margin: -1px; }
.dash { align-items: center; }
.dash::after { content: ""; width: 6px; height: 1.500px; background: #fff; margin-left: 1px; }
.gap { margin-top: 14.700px; }
.mt1 { margin-top: 1px; } .mt3 { margin-top: 3px; } .mt4 { margin-top: 4px; } .mt5 { margin-top: 5px; } .mt6 { margin-top: 6px; } .mt8 { margin-top: 7.400px; } .mt11 { margin-top: 11px; } .mt12 { margin-top: 12px; } .mt13 { margin-top: 12.500px; } .mt15 { margin-top: 15px; } .mt18 { margin-top: 18px; } .mt24 { margin-top: 24px; } .mt25 { margin-top: 25px; }
.pb24 { padding-bottom: 24px; } .pb29 { padding-bottom: 29px; }
.take { padding-bottom: 15px; }
.actions { display: flex; align-items: center; justify-content: flex-end; gap: 23px; margin-top: 29px; }
.cancel { font-weight: 600; color: #545b64; font-size: 9.500px; }
.avail { margin-top: 15.500px; height: 135px; box-shadow: 1px 0 1px rgba(0,28,36,.15), -1px 0 1px rgba(0,28,36,.07); }
.shift { margin-left: 2px; }
.auth { margin-top: 5px; }

/* key dropdown */
.keys { display: flex; }
.strip { width: 7px; height: 156px; margin-top: 10px; background: #efefef; }
.keybody { padding: 21px 0 0 14.500px; }
.opts { width: 386px; height: 64px; background: #fff; box-shadow: 0 1px 1px rgba(0,28,36,.4), 1px 0 1px rgba(0,28,36,.15), -1px 0 1px rgba(0,28,36,.15); display: flex; flex-direction: column; }
.opts span { height: 21px; line-height: 20px; padding-left: 8px; border-bottom: 1px solid #eaeded; }
.opts .hov { height: 22px; background: #f1faff; border: 1px solid #3a9ab8; padding-left: 7px; }
.tight { margin-top: -1px; }

/* banner */
.wide { flex: 1; }
.banner { display: flex; height: 62px; background: #0073bb; border-bottom: 1.500px solid #3fb0d8; color: #fff; padding: 0 14px 0 14px; }
.spin { width: 4px; height: 4px; border-right: 1px solid #bfe; border-bottom: 1px solid #bfe; margin-top: 18px; border-radius: 50%; }
.msg { flex: 1; padding: 10px 0 0 11px; line-height: 18.200px; }
.msg b { font-size: 9.600px; letter-spacing: -.15px; }
.msg p { font-size: 9.800px; }
.banner .btn { width: 90px; height: 21px; margin-top: 12px; border-color: #fff; }
.x { width: 10px; height: 10px; margin: 14px 0 0 16px; }

/* lists */
.list { overflow: hidden; background: #fafafa; }
.tools { display: flex; align-items: center; gap: 4px; height: 46.500px; padding: 2px 18.500px 0 15px; }
.tools h3 { flex: 1; margin-top: -7px; }
.tools small { font-weight: 400; font-size: 12.200px; color: #687078; }
.filter { display: flex; align-items: center; justify-content: space-between; padding: 0 16px 0 14.500px; height: 19px; }
.filter .inp { width: 525px; padding-left: 7px; flex: none; }
.filter .inp svg { width: 12px; height: 12px; margin: 0 6px 0 0; }
.filter em { color: #8d9599; letter-spacing: -.1px; }
.pager { display: flex; align-items: center; }
.pager svg { width: 7px; height: 12px; }
.pager span { margin: 0 16px; color: #16191f; }
.pager .vs { margin: 0 12px; background: #e6e9e9; }
.pager .gear { width: 12px; height: 12px; }
.row { display: grid; height: 28.600px; background: #fff; align-items: center; overflow: hidden; }
.row > div { padding-left: 14.500px; line-height: 18px; min-width: 0; overflow: hidden; display: flex; align-items: center; }
.row > div > .st { margin-right: 3px; }
.row u { line-height: 16px; letter-spacing: .02px; }
.th { height: 36.500px; margin-top: 11px; border-top: 1px solid #eaeded; border-bottom: 1px solid #eaeded; background: #fafafa; color: #545b64; font-weight: 600; font-size: 9.500px; letter-spacing: -.14px; }
.th > div { height: 18px; border-left: 1px solid #eaeded; padding-right: 14px; margin-top: -1px; }
.th > div:first-child { border: 0; }
.th > div > svg { width: 7px; height: 8px; margin-left: auto; }
.sorted { color: #16191f; }
.snap { grid-template-columns: 39px 288.500px 144px 289px 287.500px 84px 82px 1fr; }
.dbs { grid-template-columns: 39px 289px 66px 117.500px 100px 89px 86px 97px 128.500px 100px 1fr; }
.th.dbs > div:nth-child(2) { padding-left: 11px; }
.name { padding-left: 39px !important; }
.plus { width: 10px; height: 10px; border: 1px solid #aab1b5; font: 8px/8px "Open Sans", sans-serif; text-align: center; color: #687078; margin-right: 17px; }
.sel { background: #f1f8fd; box-shadow: inset 0 0 0 1.300px #4aaec6; }
.hbar { height: 12px; background: #f0f0f0; display: flex; align-items: center; padding: 0 4px; }
.hbar svg { width: 5px; height: 5px; color: #555; }
.al { transform: rotate(90deg); }
.ar { transform: rotate(-90deg); margin-left: auto; }
.thumb { height: 10px; background: #c1c1c1; margin-left: 4px; }
.w765 { width: 765px; } .w959 { width: 959px; }
.toggle { width: 17px; height: 12px; border-radius: 6px; background: radial-gradient(circle at 11px 6px, #fff 4px, #0073bb 4.600px); }
.grp { margin: 0 11px 0 0; }
.arc { width: 5px; height: 5px; border-radius: 50%; border-left: 1px solid #aaa; border-bottom: 1px solid #aaa; }
.s10 .tools { gap: 7.500px; }

/* annotations */
.marks { position: absolute; left: 0; top: 0; }
.blend { mix-blend-mode: multiply; }
.yellow { fill: #ffe800; }
.orange path { fill: none; stroke: #ff7f27; stroke-width: 5; }
```
